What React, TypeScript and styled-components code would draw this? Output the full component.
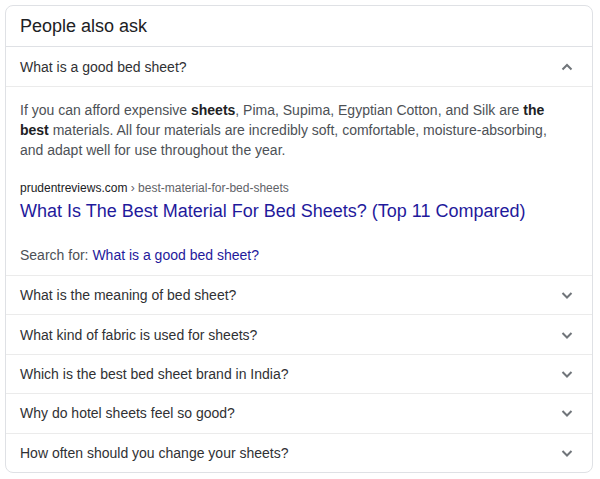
import React from 'react';
import styled, { createGlobalStyle } from 'styled-components';

const GlobalStyle = createGlobalStyle`
  html, body {
    margin: 0;
    padding: 0;
    background: #ffffff;
  }
  body {
    font-family: "Liberation Sans", Arial, sans-serif;
  }
`;

// layout
const Page = styled.div`
  padding: 5px 7px 7px 5px;
`;

const Card = styled.div`
  border: 1px solid #dfe1e5;
  border-radius: 8px;
  background: #fff;
  overflow: hidden;
`;

const Header = styled.div`
  height: 40px;
  display: flex;
  align-items: center;
  padding: 0 14px;
  font-size: 18px;
  color: #202124;
  border-bottom: 1px solid #dfe1e5;
`;

const QuestionRow = styled.div<{ $last?: boolean }>`
  display: flex;
  align-items: center;
  justify-content: space-between;
  height: 38.4px;
  padding: 0 18px 0 14px;
  font-size: 14px;
  color: #303134;
  border-bottom: ${(p) => (p.$last ? 'none' : '1px solid #ebebeb')};
`;

const FirstRow = styled(QuestionRow)`
  height: 39px;
`;

const Answer = styled.div`
  padding: 13px 14px 10px;
  border-bottom: 1px solid #ebebeb;
`;

const Paragraph = styled.div`
  font-size: 14px;
  line-height: 20px;
  color: #4d5156;
  b {
    color: #202124;
  }
`;

const Source = styled.div`
  margin-top: 20px;
  font-size: 12px;
  line-height: 16px;
  color: #202124;
  span {
    color: #5f6368;
  }
`;

const TitleLink = styled.a`
  display: block;
  margin-top: 2px;
  font-size: 18px;
  line-height: 26px;
  color: #1f1a9c;
  text-decoration: none;
`;

const SearchFor = styled.div`
  margin-top: 21px;
  font-size: 14px;
  line-height: 20px;
  color: #4d5156;
  a {
    color: #1f1a9c;
    text-decoration: none;
  }
`;

const ChevronIcon = styled.svg`
  width: 14px;
  height: 14px;
  flex-shrink: 0;
`;

const Chevron: (props: { up?: boolean }) => JSX.Element = ({ up }) => (
  <ChevronIcon viewBox="0 0 14 14">
    <path
      d={up ? 'M2.5 9.5 L7 5 L11.5 9.5' : 'M2.5 5 L7 9.5 L11.5 5'}
      fill="none"
      stroke="#70757a"
      strokeWidth="2"
    />
  </ChevronIcon>
);

const questions = [
  'What is the meaning of bed sheet?',
  'What kind of fabric is used for sheets?',
  'Which is the best bed sheet brand in India?',
  'Why do hotel sheets feel so good?',
  'How often should you change your sheets?',
];

export default function App() {
  return (
    <>
      <GlobalStyle />
      <Page>
        <Card>
          <Header>People also ask</Header>
          <FirstRow>
            What is a good bed sheet?
            <Chevron up />
          </FirstRow>
          <Answer>
            <Paragraph>
              If you can afford expensive <b>sheets</b>, Pima, Supima, Egyptian Cotton, and Silk are <b>the</b>
              <br />
              <b>best</b> materials. All four materials are incredibly soft, comfortable, moisture-absorbing,
              <br />
              and adapt well for use throughout the year.
            </Paragraph>
            <Source>
              prudentreviews.com <span>› best-material-for-bed-sheets</span>
            </Source>
            <TitleLink href="#">What Is The Best Material For Bed Sheets? (Top 11 Compared)</TitleLink>
            <SearchFor>
              Search for: <a href="#">What is a good bed sheet?</a>
            </SearchFor>
          </Answer>
          {questions.map((q, i) => (
            <QuestionRow key={q} $last={i === questions.length - 1}>
              {q}
              <Chevron />
            </QuestionRow>
          ))}
        </Card>
      </Page>
    </>
  );
}
